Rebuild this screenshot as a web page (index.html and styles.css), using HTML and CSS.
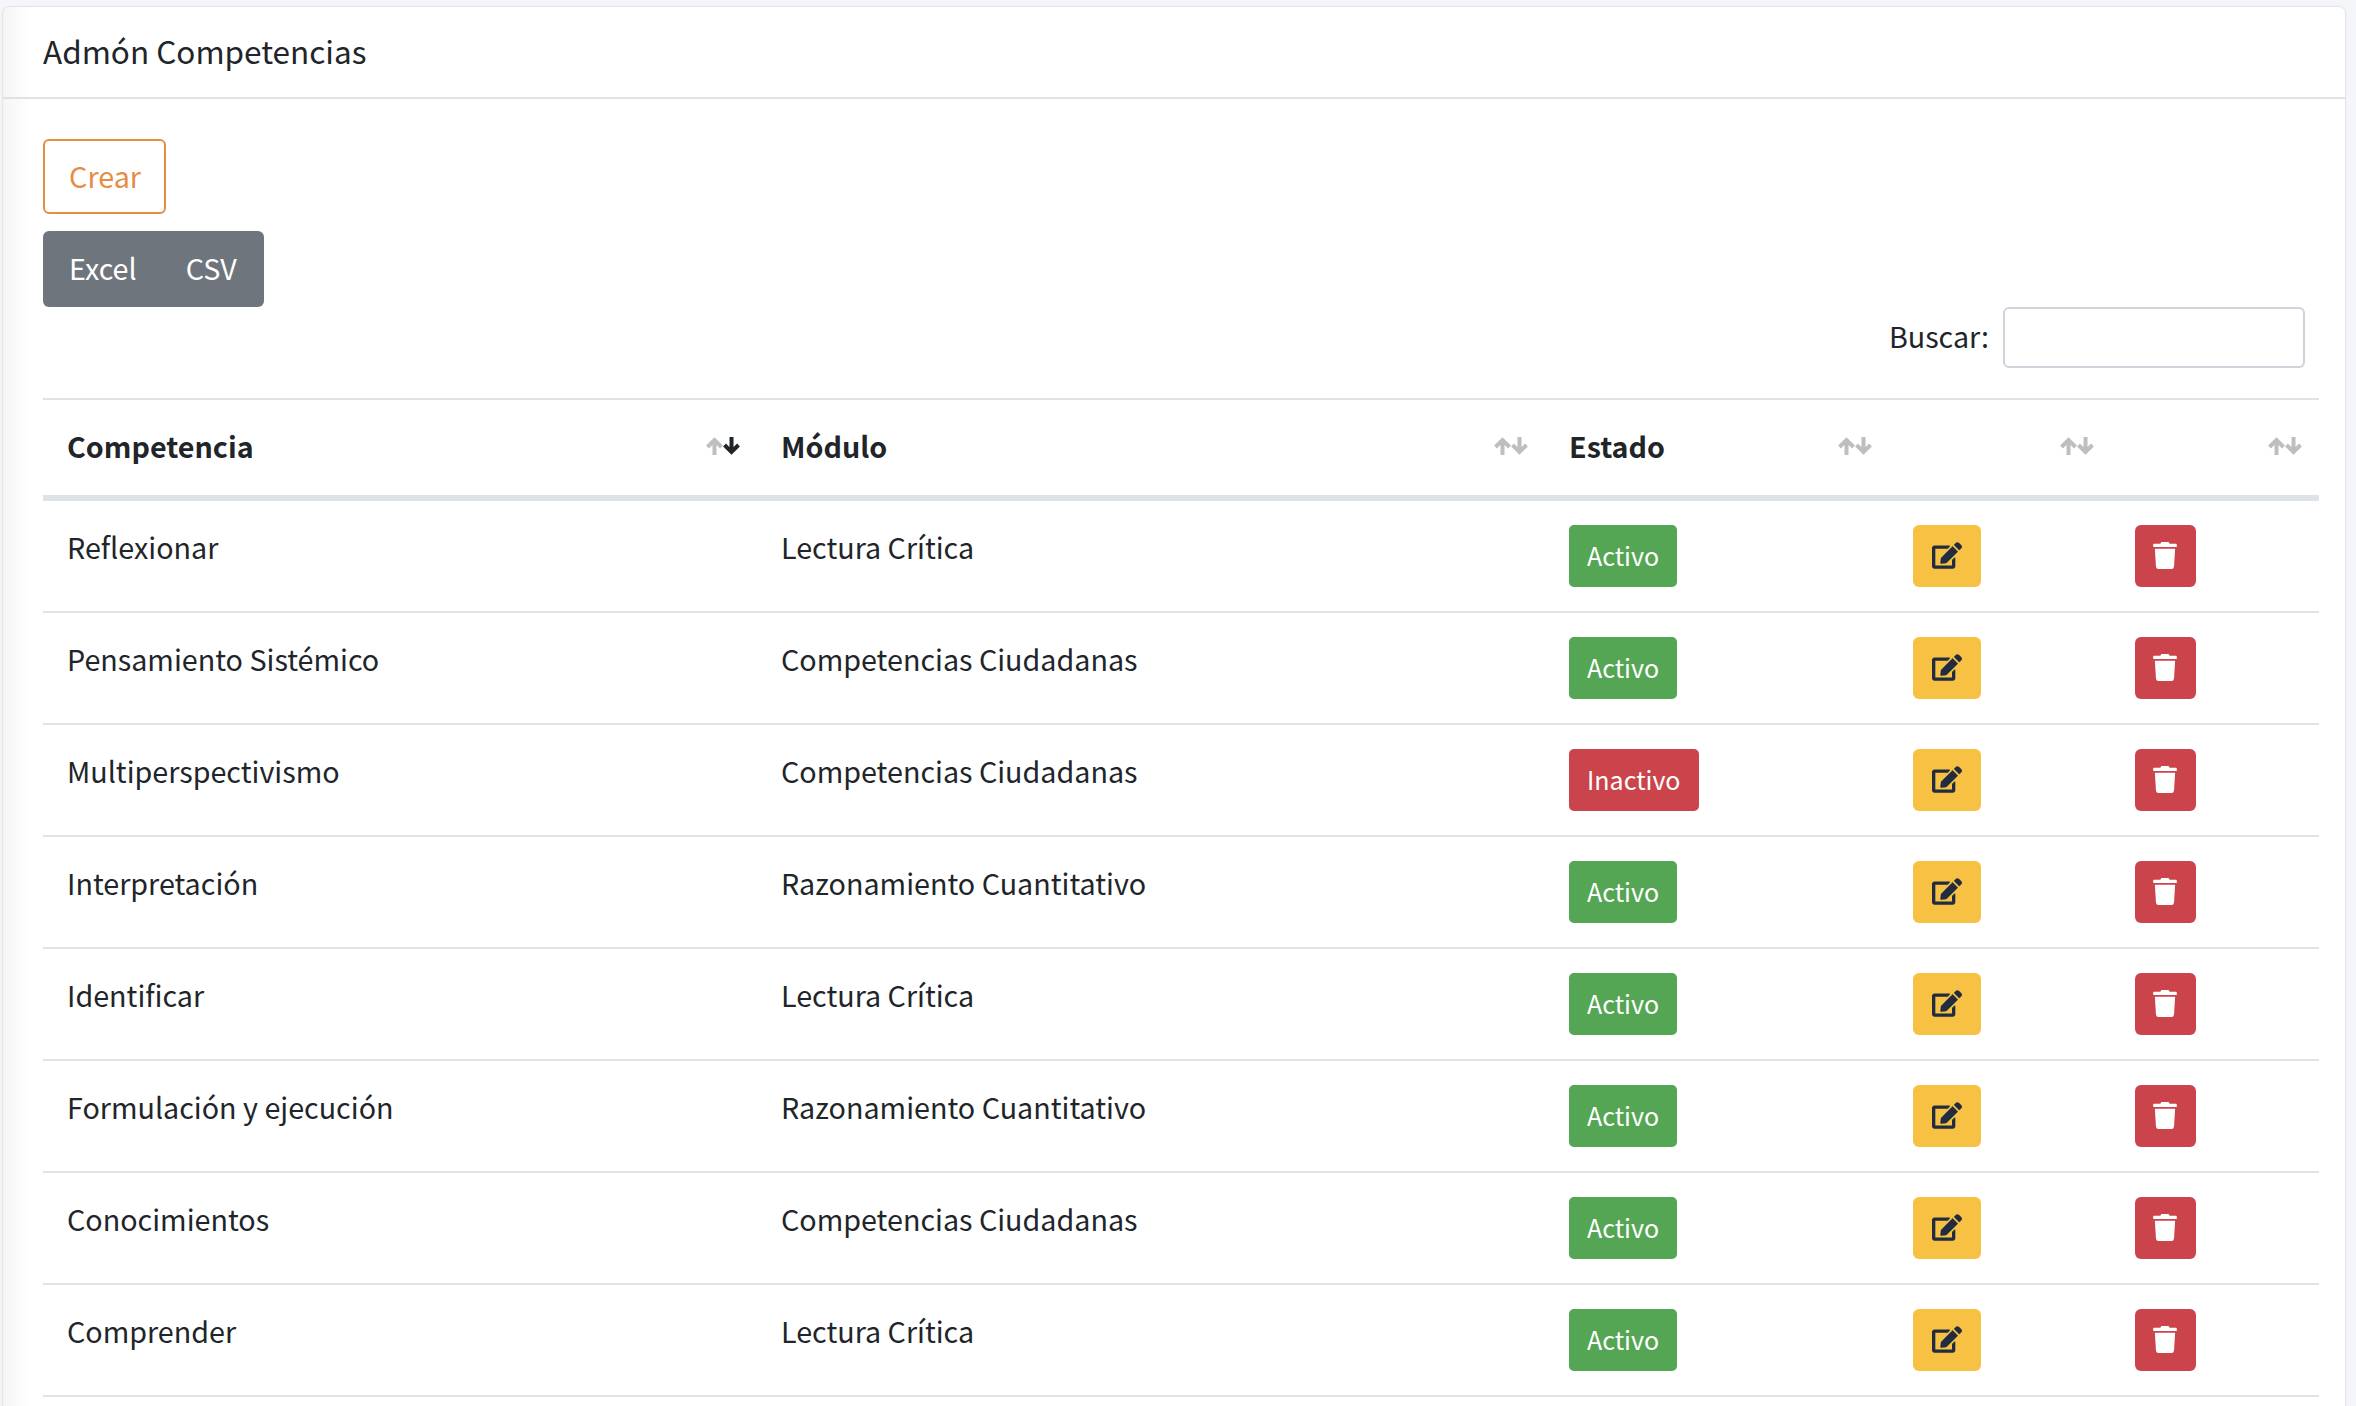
FILE: index.html
```html
<!DOCTYPE html>
<html lang="es">
<head>
<meta charset="utf-8">
<title>Admón Competencias</title>
<link rel="stylesheet" href="styles.css">
</head>
<body>
<svg class="defs" aria-hidden="true">
  <symbol id="sort" viewBox="0 0 34 18">
    <path class="up" d="M8.500 18V3M1.500 10L8.500 3l7 7" />
    <path class="down" d="M25.500 0v15M18.500 8L25.500 15l7-7" />
  </symbol>
  <symbol id="edit" viewBox="0 0 576 512"><path d="M402.600 83.200l90.200 90.200c3.800 3.800 3.800 10 0 13.800L274.400 405.600l-92.800 10.300c-12.400 1.400-22.900-9.100-21.500-21.500l10.300-92.800L388.800 83.200c3.800-3.800 10-3.800 13.800 0zm162-22.900l-48.800-48.800c-15.200-15.200-39.900-15.200-55.200 0l-35.400 35.400c-3.800 3.800-3.800 10 0 13.800l90.200 90.200c3.800 3.800 10 3.800 13.800 0l35.400-35.400c15.200-15.300 15.200-40 0-55.200zM384 346.200V448H64V128h229.800c3.200 0 6.200-1.300 8.500-3.500l40-40c7.600-7.600 2.200-20.500-8.500-20.500H48C21.500 64 0 85.500 0 112v352c0 26.500 21.500 48 48 48h352c26.500 0 48-21.500 48-48V306.200c0-10.700-12.900-16-20.500-8.500l-40 40c-2.200 2.300-3.500 5.300-3.500 8.500z"/></symbol>
  <symbol id="trash" viewBox="0 0 448 512"><path d="M432 32H312l-9.400-18.700A24 24 0 0 0 281.100 0H166.800a23.720 23.720 0 0 0-21.400 13.300L136 32H16A16 16 0 0 0 0 48v32a16 16 0 0 0 16 16h416a16 16 0 0 0 16-16V48a16 16 0 0 0-16-16zM53.200 467a48 48 0 0 0 47.900 45h245.800a48 48 0 0 0 47.900-45L416 128H32z"/></symbol>
</svg>
<main class="card">
  <header class="card-header">Admón Competencias</header>
  <section class="card-body">
    <button class="btn btn-create">Crear</button>
    <div class="btn-group"><button class="btn btn-export">Excel</button><button class="btn btn-export">CSV</button></div>
    <div class="search"><label for="q">Buscar:</label><input id="q" type="text"></div>
    <table class="grid">
      <colgroup><col class="c1"><col class="c2"><col class="c3"><col class="c4"><col class="c5"></colgroup>
      <thead>
        <tr>
          <th><div class="th-in">Competencia<svg class="sort sorted"><use href="#sort"/></svg></div></th>
          <th><div class="th-in">Módulo<svg class="sort"><use href="#sort"/></svg></div></th>
          <th><div class="th-in">Estado<svg class="sort"><use href="#sort"/></svg></div></th>
          <th><div class="th-in"><span></span><svg class="sort"><use href="#sort"/></svg></div></th>
          <th><div class="th-in"><span></span><svg class="sort"><use href="#sort"/></svg></div></th>
        </tr>
      </thead>
      <tbody>
        <tr><td>Reflexionar</td><td>Lectura Crítica</td><td><span class="tag on">Activo</span></td><td><button class="btn act warn"><svg class="i-edit"><use href="#edit"/></svg></button></td><td><button class="btn act del"><svg class="i-trash"><use href="#trash"/></svg></button></td></tr>
        <tr><td>Pensamiento Sistémico</td><td>Competencias Ciudadanas</td><td><span class="tag on">Activo</span></td><td><button class="btn act warn"><svg class="i-edit"><use href="#edit"/></svg></button></td><td><button class="btn act del"><svg class="i-trash"><use href="#trash"/></svg></button></td></tr>
        <tr><td>Multiperspectivismo</td><td>Competencias Ciudadanas</td><td><span class="tag off">Inactivo</span></td><td><button class="btn act warn"><svg class="i-edit"><use href="#edit"/></svg></button></td><td><button class="btn act del"><svg class="i-trash"><use href="#trash"/></svg></button></td></tr>
        <tr><td>Interpretación</td><td>Razonamiento Cuantitativo</td><td><span class="tag on">Activo</span></td><td><button class="btn act warn"><svg class="i-edit"><use href="#edit"/></svg></button></td><td><button class="btn act del"><svg class="i-trash"><use href="#trash"/></svg></button></td></tr>
        <tr><td>Identificar</td><td>Lectura Crítica</td><td><span class="tag on">Activo</span></td><td><button class="btn act warn"><svg class="i-edit"><use href="#edit"/></svg></button></td><td><button class="btn act del"><svg class="i-trash"><use href="#trash"/></svg></button></td></tr>
        <tr><td>Formulación y ejecución</td><td>Razonamiento Cuantitativo</td><td><span class="tag on">Activo</span></td><td><button class="btn act warn"><svg class="i-edit"><use href="#edit"/></svg></button></td><td><button class="btn act del"><svg class="i-trash"><use href="#trash"/></svg></button></td></tr>
        <tr><td>Conocimientos</td><td>Competencias Ciudadanas</td><td><span class="tag on">Activo</span></td><td><button class="btn act warn"><svg class="i-edit"><use href="#edit"/></svg></button></td><td><button class="btn act del"><svg class="i-trash"><use href="#trash"/></svg></button></td></tr>
        <tr><td>Comprender</td><td>Lectura Crítica</td><td><span class="tag on">Activo</span></td><td><button class="btn act warn"><svg class="i-edit"><use href="#edit"/></svg></button></td><td><button class="btn act del"><svg class="i-trash"><use href="#trash"/></svg></button></td></tr>
      </tbody>
    </table>
  </section>
</main>
</body>
</html>
```

FILE: styles.css
```css
* { box-sizing: border-box; }
html, body { height: 100%; overflow: hidden; }
body {
  margin: 0;
  padding: 7px 11px 0 3px;
  background: #f4f6f9;
  color: #212529;
  font-family: "Noto Sans CJK SC", "Noto Sans CJK JP", "Noto Sans", sans-serif;
  font-size: 24px;
  line-height: 36px;
}
.defs { position: absolute; width: 0; height: 0; }
.card {
  min-height: 1500px;
  background: linear-gradient(90deg, #f5f5f6, #fff 28px);
  border-radius: 6px 6px 0 0;
  box-shadow: 0 0 2px rgba(0, 0, 0, .25);
}
.card-header {
  height: 92px;
  padding: 25px 40px 0;
  border-bottom: 2px solid #dfe1e4;
  line-height: 36px;
  font-size: 31.500px;
}
.card-body { padding: 40px 26px 0 40px; }
.btn {
  display: block;
  font: inherit;
  border-radius: 6px;
  cursor: pointer;
}
.btn-create {
  height: 75px;
  width: 123px;
  padding: 0 0 2px 1px;
  background: transparent;
  border: 2px solid #e58c45;
  color: #e58c45;
  font-size: 28.700px;
}
.btn-group {
  display: flex;
  width: 221px;
  height: 76px;
  margin-top: 17px;
  background: #6f757d;
  border-radius: 6px;
}
.btn-export {
  padding: 0 25px 2px;
  background: transparent;
  border: 0;
  color: #fff;
  font-size: 28.700px;
}
.btn-export:first-child { padding: 0 24px 2px 26px; }
.search {
  display: flex;
  justify-content: flex-end;
  align-items: center;
  gap: 14px;
  padding-right: 14px;
  font-size: 28.700px;
}
.search label { padding-bottom: 3px; }
.search input {
  width: 302px;
  height: 61px;
  border: 2px solid #ced4da;
  border-radius: 6px;
  background: #fff;
}
.grid {
  width: 2276px;
  margin-top: 30px;
  border-collapse: collapse;
  table-layout: fixed;
  border-top: 2px solid #dfe3e7;
}
.c1 { width: 714px; }
.c2 { width: 788px; }
.c3 { width: 344px; }
.c4 { width: 222px; }
.c5 { width: 208px; }
th {
  height: 99px;
  padding: 0 17px 3px 24px;
  border-bottom: 6px solid #dfe3e7;
  text-align: left;
  font-weight: 700;
  font-size: 28.700px;
}
.th-in { display: flex; justify-content: space-between; align-items: center; }
.sort { --down: #bdbec0; width: 34px; height: 18px; fill: none; stroke: #bdbec0; stroke-width: 4; }
.sorted { --down: #212529; }
.down { stroke: var(--down); }
td {
  height: 112px;
  padding: 24px;
  border-bottom: 2px solid #dfe3e7;
  vertical-align: top;
  font-size: 28.700px;
}
td:nth-child(-n+2) { padding-top: 28px; }
.tag {
  display: inline-block;
  height: 62px;
  padding: 0 18px;
  border-radius: 5px;
  color: #fff;
  font-size: 25px;
  line-height: 60px;
  vertical-align: top;
}
.on { background: #54a654; }
.off { background: #cb444b; }
.act {
  display: flex;
  align-items: center;
  justify-content: center;
  height: 62px;
  border: 0;
  padding: 0 0 1px;
}
.warn { width: 68px; background: #f7c244; }
.del { width: 61px; padding-right: 1px; background: #cb444b; }
.i-edit { width: 30px; height: 27px; fill: #212d3f; }
.i-trash { width: 24px; height: 27px; fill: #fff; }
```
